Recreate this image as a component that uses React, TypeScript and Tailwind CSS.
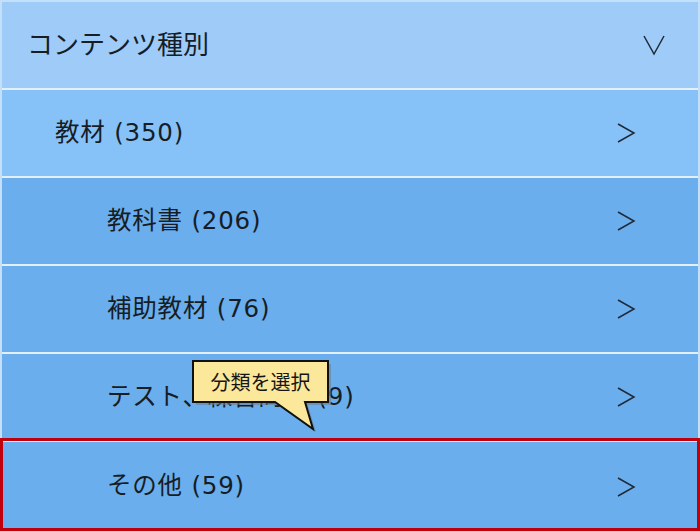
import React from 'react';

const font = { fontFamily: '"DejaVu Sans", "Noto Sans CJK JP", sans-serif' };

interface RowProps {
  label: string;
  indent: string;
  bg: string;
  last?: boolean;
}

function ChevronRight() {
  return (
    <svg width="20" height="22" viewBox="0 0 20 22" className="shrink-0">
      <path d="M2 2 L18 11 L2 20" fill="none" stroke="#1f2a36" strokeWidth="1.5" />
    </svg>
  );
}

function ChevronDown() {
  return (
    <svg width="24" height="22" viewBox="0 0 24 22" className="shrink-0">
      <path d="M2 2 L12 20 L22 2" fill="none" stroke="#1f2a36" strokeWidth="1.5" />
    </svg>
  );
}

function Row({ label, indent, bg, last }: RowProps) {
  return (
    <div
      className={`flex items-center justify-between border-t-2 border-[#e3f0fc] pr-[62px] ${indent} ${bg} ${
        last ? 'h-[91px]' : 'h-[88px]'
      }`}
    >
      <span className="text-[24.5px] text-[#161d25] tracking-[0.8px]">{label}</span>
      <ChevronRight />
    </div>
  );
}

export default function App() {
  return (
    <div className="relative w-[700px] h-[531px] overflow-hidden bg-[#c9e2fa]" style={font}>
      <div className="flex flex-col h-full border-t-2 border-x-2 border-[#c4dffa]">
        {/* header */}
        <div className="flex items-center justify-between h-[86px] pl-[25px] pr-[32px] bg-[#9ecbf7]">
          <span className="text-[26px] text-[#161d25]">コンテンツ種別</span>
          <ChevronDown />
        </div>
        <Row label="教材 (350)" indent="pl-[53px]" bg="bg-[#86c2f8]" />
        <Row label="教科書 (206)" indent="pl-[105px]" bg="bg-[#6aaeed]" />
        <Row label="補助教材 (76)" indent="pl-[105px]" bg="bg-[#6aaeed]" />
        <Row label="テスト、練習問題 (9)" indent="pl-[105px]" bg="bg-[#6aaeed]" />
        <Row label="その他 (59)" indent="pl-[105px]" bg="bg-[#6aaeed]" last />
      </div>

      {/* selection outline */}
      <div className="absolute left-0 right-0 bottom-0 top-[438px] border-[3px] border-[#c0000c] pointer-events-none" />

      {/* callout */}
      <div className="absolute left-[190px] top-[358px] w-[144px] h-[76px]">
        <svg width="144" height="76" viewBox="0 0 144 76" className="absolute inset-0">
          <path d="M6 6 H141 V47 H118 L126 74 L88 47 H6 Z" fill="#6b7d8f" opacity="0.55" />
          <path
            d="M3 3 H138 V44 H115 L123 71 L85 44 H3 Z"
            fill="#fce89a"
            stroke="#111"
            strokeWidth="2"
          />
        </svg>
        <div className="absolute left-[3px] top-[3px] w-[135px] h-[41px] flex items-center justify-center">
          <span className="text-[20px] text-[#161616]" style={{ fontFamily: '"Noto Sans CJK JP", sans-serif' }}>
            分類を選択
          </span>
        </div>
      </div>
    </div>
  );
}
